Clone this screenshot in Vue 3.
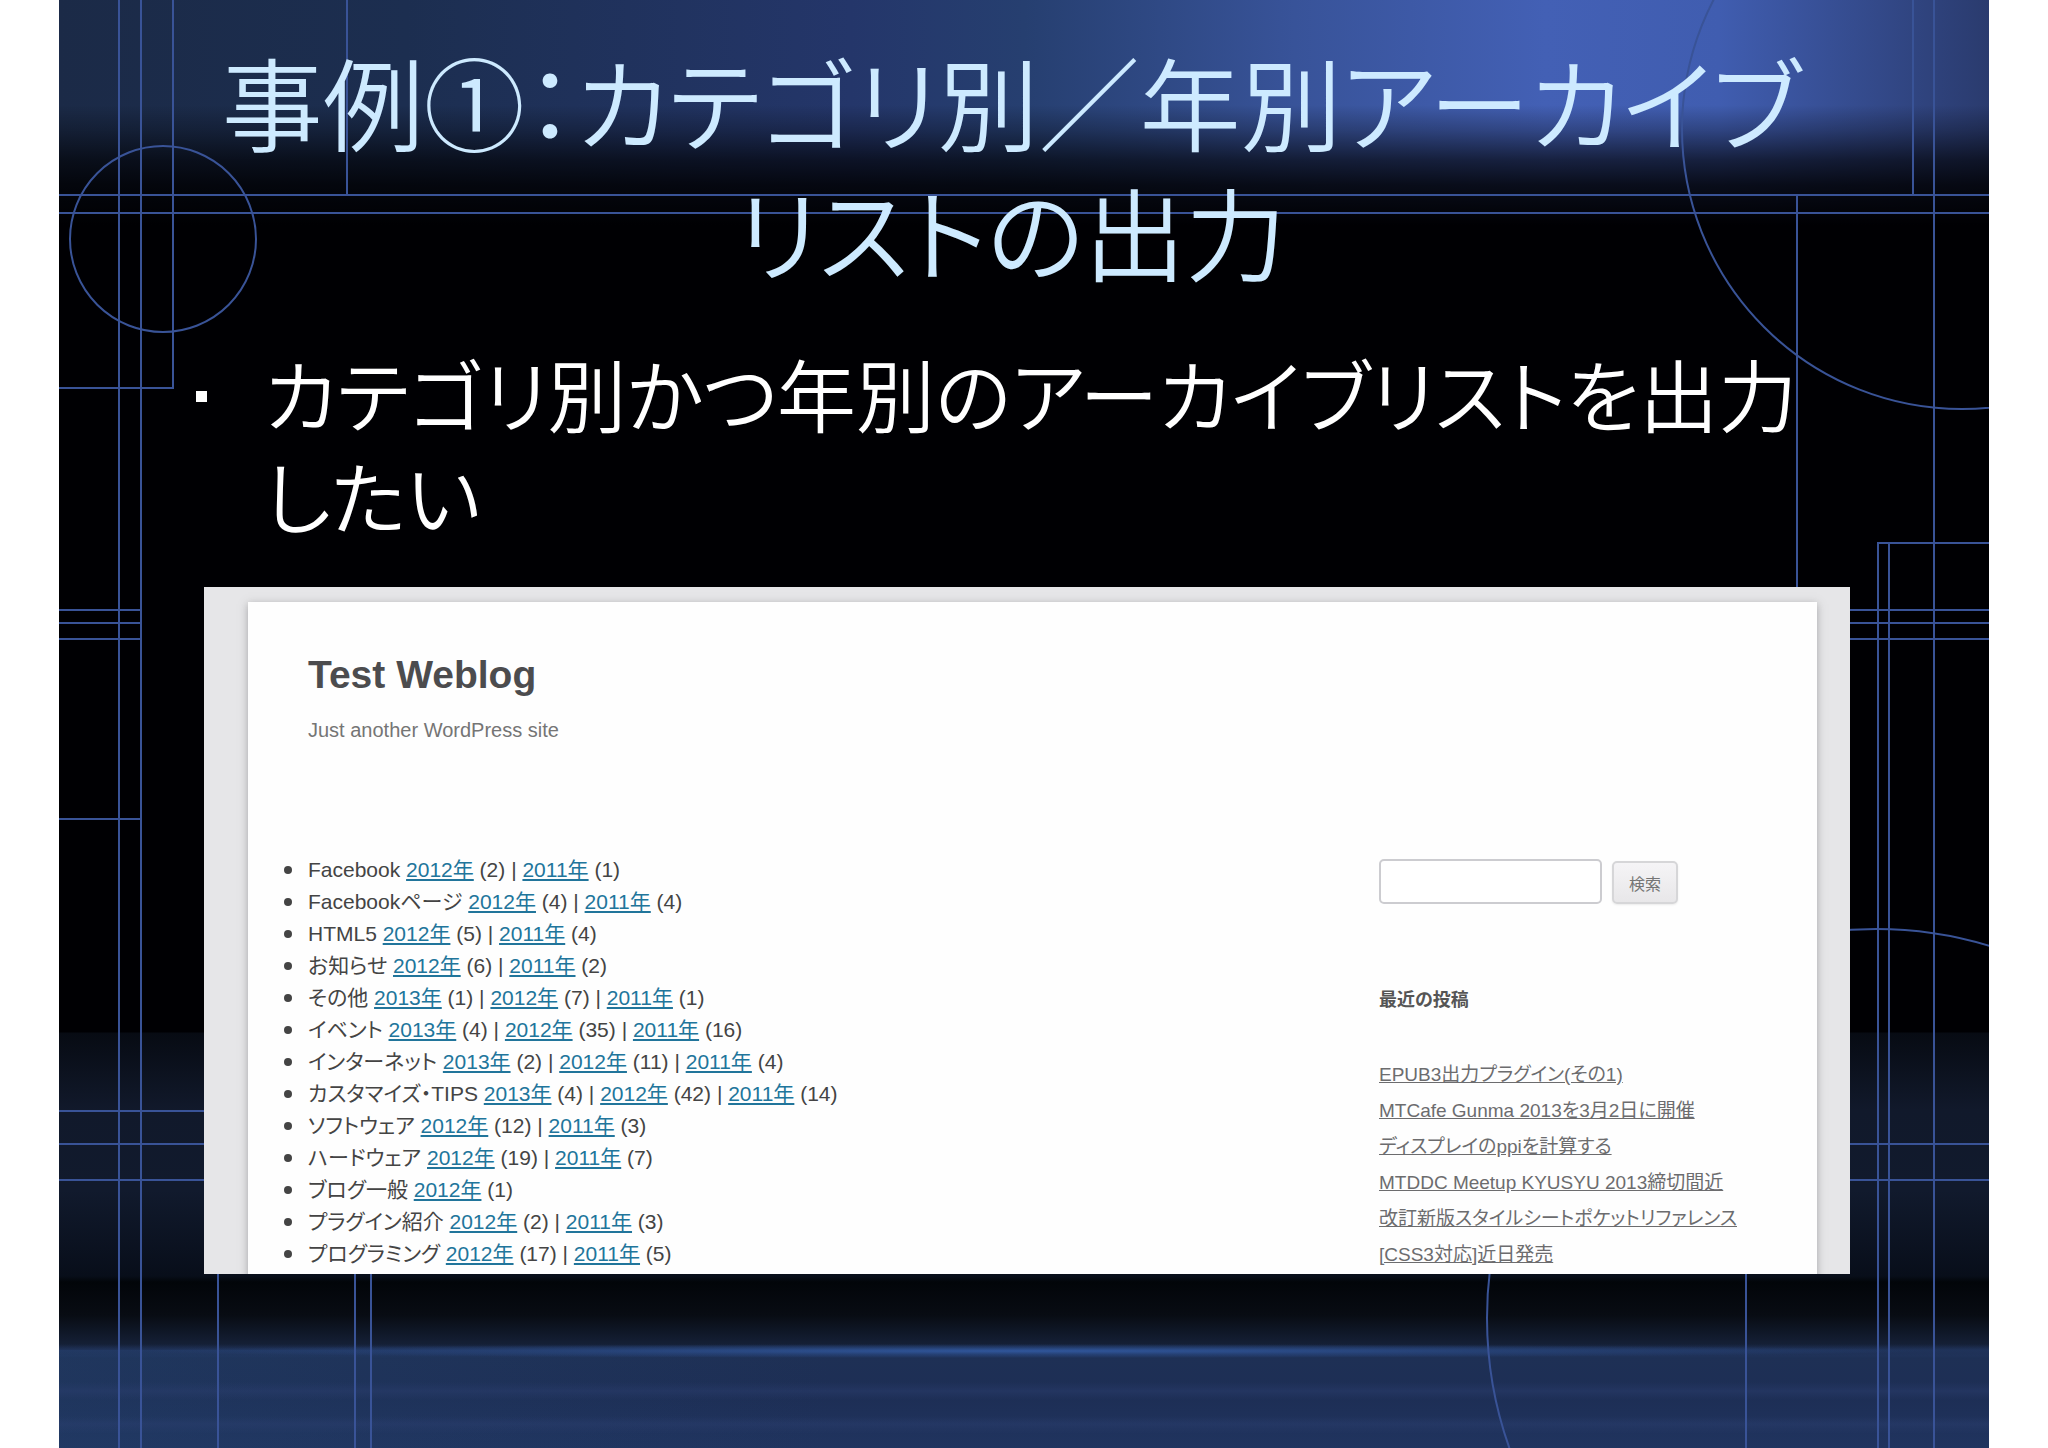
<script setup>
const categories = [
  { name: 'Facebook', years: [[2012, 2], [2011, 1]] },
  { name: 'Facebookページ', years: [[2012, 4], [2011, 4]] },
  { name: 'HTML5', years: [[2012, 5], [2011, 4]] },
  { name: 'お知らせ', years: [[2012, 6], [2011, 2]] },
  { name: 'その他', years: [[2013, 1], [2012, 7], [2011, 1]] },
  { name: 'イベント', years: [[2013, 4], [2012, 35], [2011, 16]] },
  { name: 'インターネット', years: [[2013, 2], [2012, 11], [2011, 4]] },
  { name: 'カスタマイズ・TIPS', years: [[2013, 4], [2012, 42], [2011, 14]] },
  { name: 'ソフトウェア', years: [[2012, 12], [2011, 3]] },
  { name: 'ハードウェア', years: [[2012, 19], [2011, 7]] },
  { name: 'ブログ一般', years: [[2012, 1]] },
  { name: 'プラグイン紹介', years: [[2012, 2], [2011, 3]] },
  { name: 'プログラミング', years: [[2012, 17], [2011, 5]] },
]

const posts = [
  ['EPUB3出力プラグイン(その1)'],
  ['MTCafe Gunma 2013を3月2日に開催'],
  ['ディスプレイのppiを計算する'],
  ['MTDDC Meetup KYUSYU 2013締切間近'],
  ['改訂新版スタイルシートポケットリファレンス', '[CSS3対応]近日発売'],
]
</script>

<template>
  <div class="page">
    <main class="slide">
      <svg class="lines" viewBox="59 0 1930 1448" preserveAspectRatio="none" aria-hidden="true">
        <path
          d="M119 0V1448M141 0V1448M173 0V388H59M347 0V194M59 195H1989M59 213H1989
             M1913 0V194M1934 0V1448M1797 195V600M1878 1448V543H1989M1889 543V1448
             M59 610H141M59 623H141M59 639H141M59 819H141
             M1840 610H1989M1840 623H1989M1840 639H1989
             M59 1111H220M59 1144H220M59 1180H220M1840 1144H1989M1840 1180H1989
             M218 1260V1448M355 1260V1448M371 1260V1448M1746 1260V1448"
        />
        <circle cx="163" cy="239" r="93" />
        <circle cx="1962" cy="129" r="280" />
        <circle cx="1876" cy="1318" r="389" />
      </svg>

      <h1 class="title">事例①：カテゴリ別／年別アーカイブ<br />リストの出力</h1>
      <ul class="points">
        <li>カテゴリ別かつ年別のアーカイブリストを出力<br />したい</li>
      </ul>

      <section class="shot">
        <div class="site">
          <header>
            <h2 class="site-name">Test Weblog</h2>
            <p class="tagline">Just another WordPress site</p>
          </header>
          <div class="columns">
            <ul class="archive">
              <li v-for="c in categories" :key="c.name">
                <div>
                  {{ c.name }}
                  <template v-for="([year, count], i) in c.years" :key="year">
                    <template v-if="i"> | </template><a href="#">{{ year }}年</a> ({{ count }})
                  </template>
                </div>
              </li>
            </ul>
            <aside class="sidebar">
              <form class="search" @submit.prevent>
                <input type="text" aria-label="検索" />
                <button type="submit">検索</button>
              </form>
              <h3>最近の投稿</h3>
              <ul class="posts">
                <li v-for="p in posts" :key="p[0]">
                  <a href="#"><template v-for="(line, i) in p" :key="i"><br v-if="i" />{{ line }}</template></a>
                </li>
              </ul>
            </aside>
          </div>
        </div>
      </section>
    </main>
  </div>
</template>

<style>
body {
  margin: 0;
  background: #fff;
}
</style>

<style scoped>
.page {
  padding: 0 59px;
  font-family: "Liberation Sans", "Noto Sans CJK JP", sans-serif;
  font-feature-settings: "palt";
}

h1, h2, h3, p, ul {
  margin: 0;
  padding: 0;
  font-weight: 400;
}

ul {
  list-style: none;
}

.slide {
  position: relative;
  box-sizing: border-box;
  min-height: 100vh;
  padding: 35px 139px 174px 145px;
  overflow: hidden;
  background:
    radial-gradient(ellipse 900px 7px at 50% 1351px, #30569b 0, #2b4d8b88 50%, transparent 100%),
    linear-gradient(transparent 1344px, #2a447a66 1350px, transparent 1358px, transparent 1382px, #2d407266 1391px, transparent 1400px, transparent 1416px, #2d407266 1424px, transparent 1434px),
    linear-gradient(90deg, #22406a66, transparent 40%) 0 1350px / 100% 98px no-repeat,
    linear-gradient(transparent 0, transparent 105px, #00000344 130px, #000003a8 160px, #000003dc 185px, #000003 225px, transparent 225px),
    linear-gradient(90deg, #1b2a47 0, #1c2e50 18%, #24366a 41%, #263f70 50%, #385399 64%, #4360b5 77%, #405db0 86%, #2a3b6e 100%) 0 0 / 100% 225px no-repeat,
    linear-gradient(#000003 1032px, #070b13 1033px, #11192b 1110px, #111a2d 1190px, #080e1a 1276px, #020509 1282px, #080c13 1315px, #152037 1345px, #1e3055 1356px, #1d2e55 1395px, #20345f 1448px);
}

.lines {
  position: absolute;
  inset: 0;
  width: 100%;
  height: 100%;
  fill: none;
  stroke: #395397;
  stroke-width: 2;
}

.title,
.points,
.shot {
  position: relative;
}

.title,
.points {
  font-family: "Noto Sans CJK JP", sans-serif;
  font-weight: 350;
  white-space: nowrap;
}

.title {
  padding-right: 32px;
  color: #cdeaff;
  font-size: 101px;
  line-height: 130px;
  text-align: center;
}

.points {
  margin-top: 47px;
  padding-left: 60px;
  color: #fff;
  font-size: 79px;
  line-height: 102px;
}

.points li::before {
  content: "";
  position: absolute;
  top: 49px;
  left: -8px;
  width: 11px;
  height: 11px;
  background: #fff;
}

.shot {
  box-sizing: border-box;
  height: 687px;
  margin-top: 41px;
  padding: 15px 33px 0 44px;
  overflow: hidden;
  background: #e6e6e8;
}

.site {
  box-sizing: border-box;
  height: 700px;
  padding: 49px 84px 0 60px;
  background: #fefefe;
  box-shadow: 0 2px 8px #64646680;
}

.site-name {
  color: #4c4c4e;
  font-size: 39px;
  font-weight: 700;
  line-height: 48px;
}

.tagline {
  margin-top: 17px;
  color: #757575;
  font-size: 20px;
  line-height: 28px;
}

.columns {
  display: flex;
  justify-content: space-between;
  margin-top: 110px;
}

.archive {
  margin-left: -24px;
  color: #444;
  font-size: 21px;
  line-height: 32px;
}

.archive li {
  display: flex;
  align-items: center;
  gap: 16px;
}

.archive li::before {
  content: "";
  width: 8px;
  height: 8px;
  border-radius: 50%;
  background: #444;
}

.archive a {
  color: #21759b;
}

.sidebar {
  width: 354px;
  padding-top: 5px;
}

.search {
  display: flex;
  align-items: flex-end;
  gap: 10px;
}

.search input {
  box-sizing: border-box;
  width: 223px;
  height: 45px;
  border: 2px solid #ccccd0;
  border-radius: 5px;
  background: #fff;
}

.search button {
  width: 66px;
  height: 43px;
  padding: 0;
  border: 2px solid #d6d6d8;
  border-radius: 5px;
  background: linear-gradient(#f5f4f6, #e8e7e9);
  box-shadow: 0 1px 2px #4040401a;
  color: #757575;
  font: 16px "Noto Sans CJK JP", sans-serif;
}

.sidebar h3 {
  margin: 83px 0 44px;
  color: #555;
  font-size: 18px;
  font-weight: 700;
  line-height: 26px;
}

.posts {
  font-size: 19px;
  line-height: 36px;
  white-space: nowrap;
}

.posts a {
  color: #6c6c6e;
}
</style>
